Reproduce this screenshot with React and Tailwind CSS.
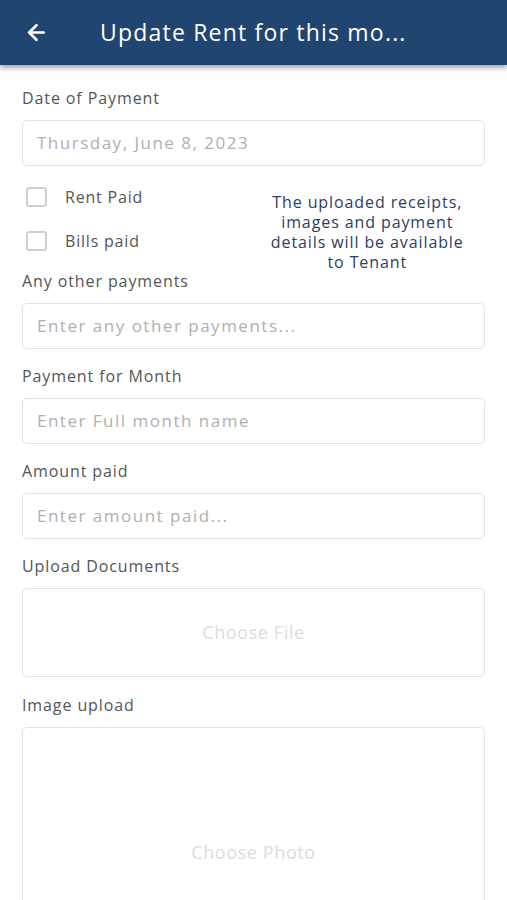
import React from 'react';
import { ArrowLeft } from 'lucide-react';

const font = { fontFamily: '"Open Sans", "Noto Sans", sans-serif' };

const Label = ({ children }) => (
  <div className="h-5 text-[16px] leading-5 tracking-[0.9px] text-[#555]">{children}</div>
);

const Field = ({ label, placeholder, className = 'mt-[17px]' }) => (
  <div className={className}>
    <Label>{label}</Label>
    <div className="mt-3 flex h-[46px] items-center rounded-[5px] border border-[#e3e3e3] px-[14px] text-[17px] tracking-[1.5px] text-[#b0b0b0]">
      {placeholder}
    </div>
  </div>
);

const Check = ({ label }) => (
  <div className="flex h-5 items-center">
    <div className="ml-1 h-5 w-[21px] rounded-[3px] border-2 border-[#cfcfcf]" />
    <span className="ml-[18px] text-[16px] tracking-[0.8px] text-[#555]">{label}</span>
  </div>
);

export default function App() {
  return (
    <div className="min-h-[900px] w-[507px] overflow-hidden bg-white" style={font}>
      {/* Header */}
      <div className="relative z-10 flex h-[65px] items-center bg-[#1f4570] shadow-[0_3px_5px_rgba(0,0,0,0.35)]">
        <ArrowLeft className="ml-[24px] h-[25px] w-[25px] text-white" strokeWidth={2.5} />
        <h1 className="ml-[51px] text-[23px] tracking-[1.2px] text-white">Update Rent for this mo...</h1>
      </div>

      <div className="px-[22px] pt-[23px]">
        <Field className="" label="Date of Payment" placeholder="Thursday, June 8, 2023" />

        {/* Checkboxes + note */}
        <div className="mt-[21px] flex">
          <div className="flex w-[228px] flex-col gap-6">
            <Check label="Rent Paid" />
            <Check label="Bills paid" />
          </div>
          <p className="mt-[5px] w-[236px] whitespace-nowrap text-center text-[16px] leading-5 tracking-[0.9px] text-[#2b4063]">
            The uploaded receipts,
            <br />
            images and payment
            <br />
            details will be available
            <br />
            to Tenant
          </p>
        </div>

        <Field className="-mt-px" label="Any other payments" placeholder="Enter any other payments..." />
        <Field label="Payment for Month" placeholder="Enter Full month name" />
        <Field label="Amount paid" placeholder="Enter amount paid..." />

        <div className="mt-[17px]">
          <Label>Upload Documents</Label>
          <div className="mt-3 flex h-[89px] items-center justify-center rounded-[5px] border border-[#e3e3e3] text-[18px] tracking-[0.6px] text-[#dcdcdc]">
            Choose File
          </div>
        </div>

        <div className="mt-[18px]">
          <Label>Image upload</Label>
          <div className="mt-3 flex h-[250px] items-center justify-center rounded-[5px] border border-[#e3e3e3] text-[18px] tracking-[0.6px] text-[#dcdcdc]">
            Choose Photo
          </div>
        </div>
      </div>
    </div>
  );
}
